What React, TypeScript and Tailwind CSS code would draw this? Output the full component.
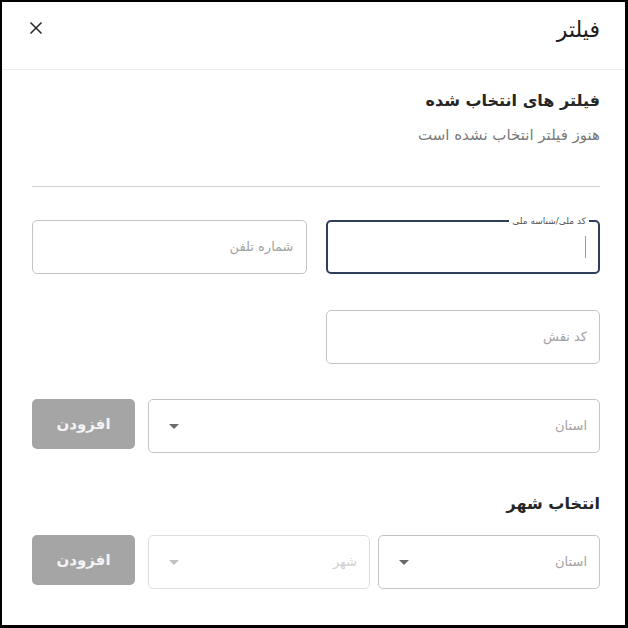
import { X } from 'lucide-react';

const font = { fontFamily: '"DejaVu Sans", "Noto Sans", sans-serif' };

function Caret({ disabled }: { disabled?: boolean }) {
  return (
    <svg width="10" height="5" viewBox="0 0 10 5" className="shrink-0">
      <path d="M0 0 L10 0 L5 5 Z" fill={disabled ? '#c2c2c2' : '#6b6b6b'} />
    </svg>
  );
}

function TextField({ placeholder, className }: { placeholder: string; className?: string }) {
  return (
    <div className={`h-[54px] rounded-[5px] border border-[#c4c4c4] flex items-center px-3 ${className ?? ''}`}>
      <span className="text-[13px] text-[#a3a3a3]">{placeholder}</span>
    </div>
  );
}

function FocusedField({ label }: { label: string }) {
  return (
    <div className="relative h-[54px] rounded-[5px] border-2 border-[#2f3e5b] flex items-center px-3">
      <span className="absolute -top-[8px] right-[9px] bg-white px-[3px] text-[9px] leading-[14px] text-[#555]">{label}</span>
      <div className="w-px h-[22px] bg-[#9a9a9a]" />
    </div>
  );
}

function SelectField({ placeholder, disabled, className }: { placeholder: string; disabled?: boolean; className?: string }) {
  return (
    <div
      className={`h-[54px] rounded-[5px] border flex items-center justify-between pr-3 pl-[20px] ${
        disabled ? 'border-[#dedede]' : 'border-[#c4c4c4]'
      } ${className ?? ''}`}
    >
      <span className={`text-[13px] ${disabled ? 'text-[#cfcfcf]' : 'text-[#a3a3a3]'}`}>{placeholder}</span>
      <Caret disabled={disabled} />
    </div>
  );
}

function AddButton() {
  return (
    <button className="w-[103px] h-[50px] shrink-0 rounded-[5px] bg-[#a5a5a5] text-[#f4f4f4] text-[15px] font-bold">
      افزودن
    </button>
  );
}

export default function App() {
  return (
    <div
      dir="rtl"
      style={font}
      className="w-[628px] h-[628px] bg-white border-t-2 border-l-2 border-r-[3px] border-b-[3px] border-black flex flex-col text-[#222]"
    >
      <div className="h-[68px] border-b border-[#ececec] shrink-0">
        <div className="h-[56px] flex items-center justify-between pr-[25px] pl-[24px]">
          <h1 className="text-[22px] leading-[28px] text-[#1c1c1c]">فیلتر</h1>
          <X size={20} strokeWidth={2} className="text-[#2a2a2a] mb-1" />
        </div>
      </div>

      <div className="flex flex-col pr-[25px] pl-[30px]">
        <h2 className="mt-[19px] h-[24px] leading-[24px] text-[16px] font-semibold text-[#262626]">فیلتر های انتخاب شده</h2>
        <p className="mt-[12px] h-[20px] leading-[20px] text-[15px] text-[#7a7a7a]">هنوز فیلتر انتخاب نشده است</p>

        <div className="mt-[41px] h-px bg-[#cfcfcf]" />

        <div className="mt-[33px] grid grid-cols-2 gap-[19px]">
          <FocusedField label="کد ملی/شناسه ملی" />
          <TextField placeholder="شماره تلفن" />
        </div>

        <div className="mt-[36px] grid grid-cols-2 gap-[19px]">
          <TextField placeholder="کد نقش" className="h-[53px]" />
        </div>

        <div className="mt-[35px] flex items-start gap-[13px]">
          <SelectField placeholder="استان" className="flex-1" />
          <AddButton />
        </div>

        <h2 className="mt-[39px] h-[24px] leading-[24px] text-[16px] font-semibold text-[#262626]">انتخاب شهر</h2>

        <div className="mt-[19px] flex items-start gap-[13px]">
          <div className="flex-1 flex gap-[8px]">
            <SelectField placeholder="استان" className="flex-1 h-[53px]" />
            <SelectField placeholder="شهر" disabled className="flex-1 h-[53px]" />
          </div>
          <AddButton />
        </div>
      </div>
    </div>
  );
}
